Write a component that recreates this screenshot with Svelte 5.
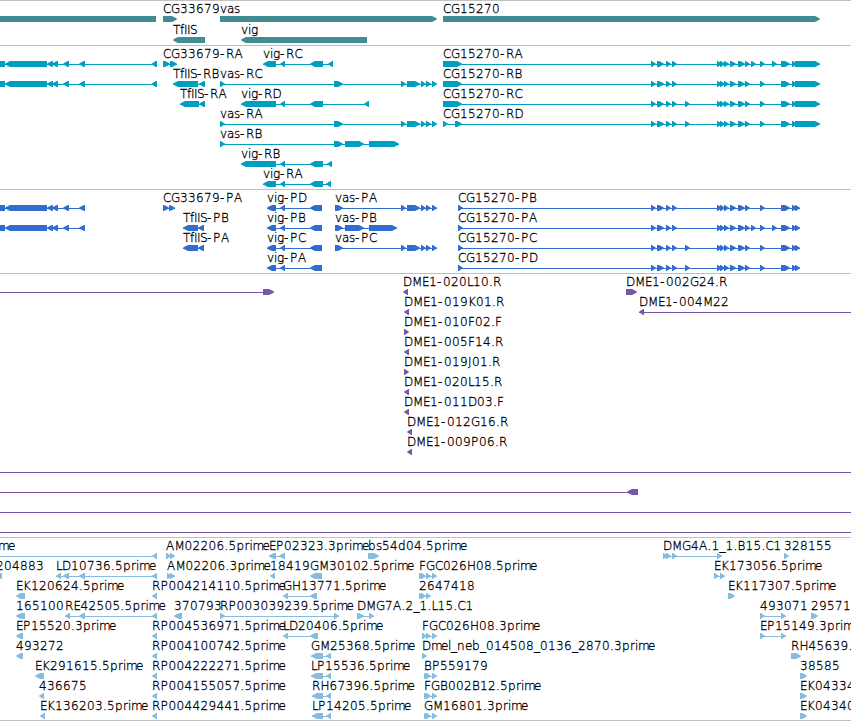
<script lang="ts">
	type Block = [number, number];
	type Feature = {
		row: number;
		dir: 'L' | 'R';
		blocks: Block[];
		label?: string;
		line?: Block;
	};
	type Track = {
		name: string;
		color: string;
		height: number;
		top: number;
		pitch: number;
		features: Feature[];
	};

	const WIDTH = 851;

	// advances for the label font, digits are 8
	const advance: Record<string, number> = {
		A: 8.5, B: 8, C: 8, D: 9, E: 7, F: 7, G: 9, H: 9, I: 3, J: 4, K: 8, L: 6, M: 10,
		P: 8, R: 8.5, S: 7, T: 7, a: 7, b: 8, d: 8, e: 7, f: 4, g: 7, i: 3, l: 3, m: 10,
		n: 8, p: 8, r: 5, s: 6, v: 7, _: 6, '-': 6, '.': 4
	};

	function glyphX(label: string, start: number): string {
		let x = start;
		return [...label]
			.map((ch) => {
				const at = x;
				x += advance[ch] ?? 8;
				return at;
			})
			.join(' ');
	}

	function f(label: string, row: number, dir: 'L' | 'R', blocks: Block[], line?: Block): Feature {
		return { label, row, dir, blocks, line };
	}

	// exons shared between several transcripts
	const leftCds: Block[] = [[-10, 5], [5, 47], [47, 53], [52, 58], [63, 69], [79, 85]];
	const leftExons: Block[] = [...leftCds, [151.5, 157]];
	const vasTail: Block[] = [[401, 406], [407, 420], [421, 426], [426, 431], [432, 437]];
	const vigMid: Block[] = [[280, 285], [310, 323]];
	const cgA: Block[] = [[651, 656], [657, 664], [666, 671], [672, 677]];
	const cgB: Block[] = [[717, 722], [720, 725], [724, 729], [730, 736], [738, 745], [745, 750]];
	const cgEnd: Block[] = [[781, 790], [792, 797], [795, 820]];
	const cgEndCds: Block[] = [[781, 790], [792, 797], [795, 800]];
	const extra: Block = [685, 690];
	const late: Block = [760, 765];
	const fgc: Block[] = [[426, 431], [432, 437]];
	const rp: Block[] = [[152, 157]];

	const tracks: Track[] = [
		{
			name: 'genes',
			color: '#408c92',
			height: 44,
			top: 15,
			pitch: 21,
			features: [
				f('', 0, 'L', [[-10, 156]]),
				f('CG33679', 0, 'R', [[163, 177]]),
				f('vas', 0, 'R', [[220, 437]]),
				f('CG15270', 0, 'R', [[443, 820]]),
				f('TfIIS', 1, 'L', [[173, 205]]),
				f('vig', 1, 'L', [[241, 367]])
			]
		},
		{
			name: 'transcripts',
			color: '#009fc1',
			height: 143,
			top: 15,
			pitch: 20,
			features: [
				f('', 0, 'L', leftExons),
				f('', 1, 'L', leftExons),
				f('CG33679-RA', 0, 'R', [[163, 170], [170, 177]]),
				f('TfIIS-RB', 1, 'L', [[173, 198], [199, 205]]),
				f('TfIIS-RA', 2, 'L', [[180, 199], [199, 205]]),
				f('vas-RC', 1, 'R', [[220, 225], [334, 343], ...vasTail]),
				f('vas-RA', 3, 'R', [[220, 225], [334, 343], ...vasTail]),
				f('vas-RB', 4, 'R', [[220, 225], [334, 343], [345, 364], [369, 399]]),
				f('vig-RC', 0, 'L', [[263, 276], ...vigMid, [328, 333]]),
				f('vig-RD', 2, 'L', [[241, 276], ...vigMid, [364, 369]]),
				f('vig-RB', 5, 'L', [[241, 276], ...vigMid, [327, 332]]),
				f('vig-RA', 6, 'L', [[263, 276], ...vigMid, [326, 331]]),
				f('CG15270-RA', 0, 'R', [[443, 462], ...cgA, ...cgB, [751, 756], late, [772, 777], ...cgEnd]),
				f('CG15270-RB', 1, 'R', [[443, 462], ...cgA, ...cgB, late, ...cgEnd]),
				f('CG15270-RC', 2, 'R', [[443, 462], ...cgA, extra, ...cgB, late, ...cgEnd]),
				f('CG15270-RD', 3, 'R', [[443, 448], [455, 462], ...cgA, extra, ...cgB, late, ...cgEnd])
			]
		},
		{
			name: 'proteins',
			color: '#316dcf',
			height: 83,
			top: 15,
			pitch: 20,
			features: [
				f('', 0, 'L', leftCds),
				f('', 1, 'L', leftCds),
				f('CG33679-PA', 0, 'R', [[163, 169], [169, 175]]),
				f('TfIIS-PB', 1, 'L', [[183, 198], [198, 204]]),
				f('TfIIS-PA', 2, 'L', [[183, 198], [198, 204]]),
				...['vig-PD', 'vig-PB', 'vig-PC', 'vig-PA'].map((label, row) =>
					f(label, row, 'L', [[267, 276], [280, 285], [310, 322]])
				),
				f('vas-PA', 0, 'R', [[335, 343], ...vasTail]),
				f('vas-PB', 1, 'R', [[335, 343], [345, 364], [369, 397]]),
				f('vas-PC', 2, 'R', [[335, 343], ...vasTail]),
				f('CG15270-PB', 0, 'R', [[458, 463], ...cgA, ...cgB, late, ...cgEndCds]),
				f('CG15270-PA', 1, 'R', [[458, 463], ...cgA, ...cgB, [751, 756], late, [772, 777], ...cgEndCds]),
				f('CG15270-PC', 2, 'R', [[458, 463], ...cgA, extra, ...cgB, late, ...cgEndCds]),
				f('CG15270-PD', 3, 'R', [[458, 463], ...cgA, extra, ...cgB, late, ...cgEndCds])
			]
		},
		{
			name: 'clones',
			color: '#7657a8',
			height: 263,
			top: 15,
			pitch: 20,
			features: [
				f('', 0, 'R', [[263, 274]], [0, 274]),
				f('DME1-020L10.R', 0, 'L', [[403, 408]]),
				f('DME1-019K01.R', 1, 'L', [[404, 409]]),
				f('DME1-010F02.F', 2, 'R', [[404, 409]]),
				f('DME1-005F14.R', 3, 'L', [[404, 409]]),
				f('DME1-019J01.R', 4, 'R', [[404, 409]]),
				f('DME1-020L15.R', 5, 'L', [[404, 409]]),
				f('DME1-011D03.F', 6, 'L', [[404, 409]]),
				f('DME1-012G16.R', 7, 'L', [[407, 412]]),
				f('DME1-009P06.R', 8, 'L', [[407, 412]]),
				f('DME1-002G24.R', 0, 'R', [[626, 637]]),
				f('DME1-004M22', 1, 'L', [[639, 644]], [639, WIDTH]),
				f('', 9, 'L', [], [0, WIDTH]),
				f('', 10, 'L', [[627, 638]], [0, 638]),
				f('', 11, 'L', [], [0, WIDTH]),
				f('', 12, 'L', [], [0, WIDTH])
			]
		},
		{
			name: 'ests',
			color: '#86bcdf',
			height: 182,
			top: 15,
			pitch: 20,
			features: [
				f('me', 0, 'L', [[-2, -2], [152, 157]]),
				f('AM02206.5prime', 0, 'R', [[166, 171], [170, 175]]),
				f('EP02323.3prime', 0, 'L', [[269, 276], [279, 285]]),
				f('bs54d04.5prime', 0, 'R', [[368, 379]]),
				f('DMG4A.1_1.B15.C1', 0, 'R', [[663, 668], [666, 671], [672, 677], [717, 722]]),
				f('328155', 0, 'R', [[784, 789]]),
				f('204883', 1, 'L', [[-4, 2]]),
				f('LD10736.5prime', 1, 'L', [[56, 61], [63, 69], [79, 85], [152, 157]]),
				f('AM02206.3prime', 1, 'R', [[167, 172], [170, 175]]),
				f('18419', 1, 'L', [[270, 275]]),
				f('GM30102.5prime', 1, 'L', [[310, 322]]),
				f('FGC026H08.5prime', 1, 'R', [[419, 424], [421, 426], ...fgc]),
				f('EK173056.5prime', 1, 'R', [[714, 719], [720, 725]]),
				f('EK120624.5prime', 2, 'L', [[16, 25]]),
				f('RP004214110.5prime', 2, 'L', rp),
				f('GH13771.5prime', 2, 'L', [[283, 288], [310, 317]]),
				f('2647418', 2, 'R', [[419, 424], [421, 426], [426, 431]]),
				f('EK117307.5prime', 2, 'R', [[728, 735]]),
				f('165100', 3, 'L', [[16, 25]]),
				f('RE42505.5prime', 3, 'L', [[65, 70], [79, 85], [152, 157]]),
				f('370793', 3, 'L', [[174, 182]]),
				f('RP003039239.5prime', 3, 'R', [[220, 225], [334, 339]]),
				f('DMG7A.2_1.L15.C1', 3, 'R', [[357, 364], [369, 374]]),
				f('493071', 3, 'R', [[760, 765], [781, 786]]),
				f('29571', 3, 'R', [[811, 818]]),
				f('EP15520.3prime', 4, 'L', [[16, 23]]),
				f('RP004536971.5prime', 4, 'L', rp),
				f('LD20406.5prime', 4, 'L', [[283, 288], [310, 318]]),
				f('FGC026H08.3prime', 4, 'R', [[422, 427], ...fgc]),
				f('EP15149.3prime', 4, 'R', [[760, 765], [781, 786]]),
				f('493272', 5, 'L', [[16, 23]]),
				f('RP004100742.5prime', 5, 'L', rp),
				f('GM25368.5prime', 5, 'L', [[311, 323], [326, 331]]),
				f('Dmel_neb_014508_0136_2870.3prime', 5, 'R', [[422, 427]]),
				f('RH45639.5prime', 5, 'R', [[791, 801]]),
				f('EK291615.5prime', 6, 'L', [[35, 44]]),
				f('RP004222271.5prime', 6, 'L', rp),
				f('LP15536.5prime', 6, 'L', [[311, 323], [326, 331]]),
				f('BP559179', 6, 'R', [[424, 429], ...fgc]),
				f('38585', 6, 'R', [[800, 807]]),
				f('436675', 7, 'L', [[39, 44]]),
				f('RP004155057.5prime', 7, 'L', rp),
				f('RH67396.5prime', 7, 'L', [[312, 323], [326, 331]]),
				f('FGB002B12.5prime', 7, 'R', [[424, 429], ...fgc]),
				f('EK04334', 7, 'R', [[800, 807]]),
				f('EK136203.5prime', 8, 'L', [[40, 45]]),
				f('RP004429441.5prime', 8, 'L', rp),
				f('LP14205.5prime', 8, 'L', [[312, 323], [326, 331]]),
				f('GM16801.3prime', 8, 'R', [[424, 429], ...fgc]),
				f('EK04340', 8, 'R', [[800, 807]])
			]
		}
	];

	function span(ft: Feature): Block {
		if (ft.line) return ft.line;
		return [ft.blocks[0][0], ft.blocks[ft.blocks.length - 1][1]];
	}

	// six pixel high bar with a pointed, slightly bulging end
	function arrow([a, b]: Block, y: number, dir: 'L' | 'R'): string {
		const s = dir === 'R' ? 1 : -1;
		const tail = dir === 'R' ? a : b;
		const tip = dir === 'R' ? b : a;
		const neck = b - a < 6 ? tip - s * 4.2 : tip - s * 5;
		const mid = tip - s * 2;
		return `M${tail} ${y}H${neck}L${mid} ${y + 1.6}L${tip} ${y + 2.7}V${y + 3.3}L${mid} ${y + 4.4}L${neck} ${y + 6}H${tail}Z`;
	}
</script>

<div class="browser">
	{#each tracks as track (track.name)}
		<section class="track">
			<svg width={WIDTH} height={track.height} fill={track.color}>
				{#each track.features as ft}
					{@const y = track.top + ft.row * track.pitch}
					{@const [x1, x2] = span(ft)}
					{#if ft.line || ft.blocks.length > 1}
						<rect x={x1} y={y + 3} width={x2 - x1} height="1" />
					{/if}
					{#each ft.blocks as block}
						{#if block[1] > block[0]}
							<path d={arrow(block, y, ft.dir)} />
						{/if}
					{/each}
					{#if ft.label}
						<text x={glyphX(ft.label, x1)} y={y - 3}>{ft.label}</text>
					{/if}
				{/each}
			</svg>
		</section>
	{/each}
</div>

<style>
	:global(body) {
		margin: 0;
		background: #fff;
	}
	.browser {
		width: 851px;
		height: 721px;
		overflow: hidden;
		box-sizing: border-box;
		border-bottom: 1px solid #c0c0c0;
	}
	.track {
		border-top: 1px solid #c0c0c0;
	}
	svg {
		display: block;
		overflow: hidden;
	}
	text {
		font-family: 'DejaVu Sans', sans-serif;
		font-size: 12px;
		font-weight: 200;
		fill: #000;
		stroke: #000;
		stroke-width: 0.3px;
	}
</style>
